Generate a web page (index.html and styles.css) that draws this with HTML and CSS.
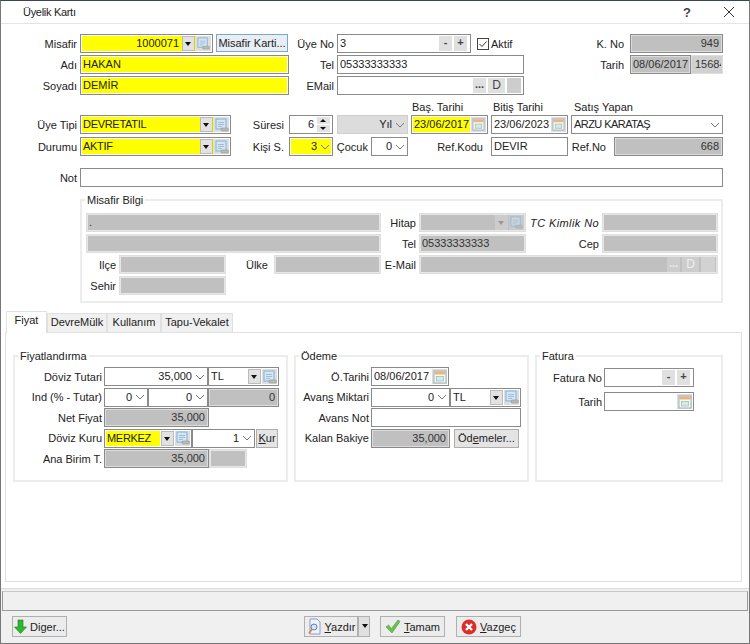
FILE: index.html
```html
<!DOCTYPE html>
<html lang="tr">
<head>
    <meta charset="UTF-8">
    <title>Üyelik Kartı</title>
    <link rel="stylesheet" href="styles.css">
</head>
<body>
    <svg class="defs" width="0" height="0">
        <symbol id="lookup" viewBox="0 0 14 14">
            <rect x="1" y="1" width="10" height="10" fill="#d4e6f6" stroke="#82b2da"/>
            <path d="M3 4.500h6M3 6.500h6M3 8.500h4" stroke="#a4bccf"/>
            <rect x="6" y="10" width="7.500" height="3" rx="1.200" fill="#b8bcb8" stroke="#8c948e" stroke-width=".6"/>
        </symbol>
        <symbol id="cal" viewBox="0 0 14 14">
            <rect x="1" y="1" width="12" height="12" fill="#f8f8f2" stroke="#9ab0c4"/>
            <rect x="1.500" y="1.500" width="11" height="3" fill="#eeb27c"/>
            <rect x="3.500" y="6.500" width="7" height="4.500" fill="#d6e8f0" stroke="#8cc09a" stroke-width=".7"/>
        </symbol>
        <symbol id="chev" viewBox="0 0 10 6">
            <path d="M1 1l4 4 4-4" fill="none" stroke="#777" stroke-width="1"/>
        </symbol>
    </svg>

    <div class="window">
        <div class="titlebar">
            <span class="title">Üyelik Kartı</span>
            <span class="help">?</span>
            <svg class="close" width="12" height="12" viewBox="0 0 12 12"><path d="M1 1l10 10M11 1L1 11" stroke="#333" stroke-width="1"/></svg>
        </div>

        <div class="form">
            <div class="row">
                <label class="lbl w80">Misafir</label>
                <div class="fld yellow w133">
                    <span class="val right">1000071</span>
                    <span class="dd"></span>
                    <span class="ico"><svg width="13" height="13"><use href="#lookup"/></svg></span>
                </div>
                <button class="btn focus w72 ml3">Misafir Karti...</button>
                <label class="lbl w49">Üye No</label>
                <div class="fld w134">
                    <span class="val">3</span>
                    <span class="sq">-</span><span class="sq">+</span>
                </div>
                <span class="check">
                    <svg width="12" height="12" viewBox="0 0 12 12"><rect x=".5" y=".5" width="11" height="11" fill="#fff" stroke="#444"/><path d="M2.500 6l2.500 2.500 4.500-5" fill="none" stroke="#333"/></svg>
                </span>
                <span class="aktif">Aktif</span>
                <label class="lbl gap6 push">K. No</label>
                <div class="fld ro w93"><span class="val right">949</span></div>
            </div>
            <div class="row">
                <label class="lbl w80">Adı</label>
                <div class="fld yellow w209"><span class="val">HAKAN</span></div>
                <label class="lbl w48">Tel</label>
                <div class="fld w187"><span class="val">05333333333</span></div>
                <label class="lbl gap6 push">Tarih</label>
                <div class="fld ro w61"><span class="val">08/06/2017</span></div>
                <div class="fld ro pale w32"><span class="val">15684</span></div>
            </div>
            <div class="row">
                <label class="lbl w80">Soyadı</label>
                <div class="fld yellow w209"><span class="val">DEMİR</span></div>
                <label class="lbl w48">EMail</label>
                <div class="fld w187">
                    <span class="val"></span>
                    <span class="sq">...</span><span class="sq wide">D</span><span class="blank"></span>
                </div>
            </div>

            <div class="heads">
                <span class="w81">Baş. Tarihi</span>
                <span class="w81">Bitiş Tarihi</span>
                <span>Satış Yapan</span>
            </div>
            <div class="row tight">
                <label class="lbl w80">Üye Tipi</label>
                <div class="fld yellow w151">
                    <span class="val kern3">DEVRETATIL</span>
                    <span class="dd"></span>
                    <span class="ico"><svg width="14" height="14"><use href="#lookup"/></svg></span>
                </div>
                <label class="lbl gap5 w58">Süresi</label>
                <div class="fld w44">
                    <span class="val right">6</span>
                    <span class="spin"><i class="up"></i><i class="down"></i></span>
                </div>
                <div class="fld off w71 ml4">
                    <span class="val right">Yıl</span>
                    <svg class="chev" width="10" height="6"><use href="#chev"/></svg>
                </div>
                <div class="fld w77 ml3">
                    <span class="val yellowtext">23/06/2017</span>
                    <span class="ico"><svg width="13" height="13"><use href="#cal"/></svg></span>
                </div>
                <div class="fld w77 ml3">
                    <span class="val">23/06/2023</span>
                    <span class="ico"><svg width="13" height="13"><use href="#cal"/></svg></span>
                </div>
                <div class="fld w152 ml3">
                    <span class="val kern5">ARZU KARATAŞ</span>
                    <svg class="chev" width="10" height="6"><use href="#chev"/></svg>
                </div>
            </div>
            <div class="row mt3">
                <label class="lbl w80">Durumu</label>
                <div class="fld yellow w151">
                    <span class="val kern3">AKTIF</span>
                    <span class="dd"></span>
                    <span class="ico"><svg width="14" height="14"><use href="#lookup"/></svg></span>
                </div>
                <label class="lbl gap5 w58">Kişi S.</label>
                <div class="fld yellow w44">
                    <span class="val right">3</span>
                    <svg class="chev" width="10" height="6"><use href="#chev"/></svg>
                </div>
                <label class="lbl w38">Çocuk</label>
                <div class="fld w37">
                    <span class="val right">0</span>
                    <svg class="chev" width="10" height="6"><use href="#chev"/></svg>
                </div>
                <label class="lbl gap8 w83">Ref.Kodu</label>
                <div class="fld w77"><span class="val">DEVIR</span></div>
                <label class="lbl gap8 w46">Ref.No</label>
                <div class="fld ro w109"><span class="val right">668</span></div>
            </div>
            <div class="row mt12">
                <label class="lbl w80">Not</label>
                <div class="fld w643"><span class="val"></span></div>
            </div>

            <fieldset class="group bilgi">
                <legend>Misafir Bilgi</legend>
                <div class="row first">
                    <div class="fld ro faint w295"><span class="val">.</span></div>
                    <label class="lbl w38">Hitap</label>
                    <div class="fld ro faint w107">
                        <span class="val"></span>
                        <span class="dd dim"></span>
                        <span class="ico dim"><svg width="13" height="13"><use href="#lookup"/></svg></span>
                    </div>
                    <label class="lbl tc w76">TC Kimlik No</label>
                    <div class="fld ro faint w116"><span class="val"></span></div>
                </div>
                <div class="row">
                    <div class="fld ro faint w295"><span class="val"></span></div>
                    <label class="lbl w38">Tel</label>
                    <div class="fld ro faint w107"><span class="val">05333333333</span></div>
                    <label class="lbl w76">Cep</label>
                    <div class="fld ro faint w116"><span class="val"></span></div>
                </div>
                <div class="row">
                    <label class="lbl w33 gap2">Ilçe</label>
                    <div class="fld ro faint w107"><span class="val"></span></div>
                    <label class="lbl w48 gap6">Ülke</label>
                    <div class="fld ro faint w107"><span class="val"></span></div>
                    <label class="lbl w38">E-Mail</label>
                    <div class="fld ro faint w299">
                        <span class="val"></span>
                        <span class="sq dim">...</span><span class="sq wide dim">D</span><span class="blank dim"></span>
                    </div>
                </div>
                <div class="row">
                    <label class="lbl w33 gap2">Sehir</label>
                    <div class="fld ro faint w107"><span class="val"></span></div>
                </div>
            </fieldset>
        </div>

        <div class="tabs">
            <span class="tab active w41">Fiyat</span>
            <span class="tab w60">DevreMülk</span>
            <span class="tab w54">Kullanım</span>
            <span class="tab w72">Tapu-Vekalet</span>
        </div>
        <div class="panel">
            <fieldset class="group w275">
                <legend>Fiyatlandırma</legend>
                <div class="rows">
                    <div class="row">
                        <label class="lbl w89">Döviz Tutari</label>
                        <div class="fld w104"><span class="val right">35,000</span><svg class="chev" width="10" height="6"><use href="#chev"/></svg></div>
                        <div class="fld w71"><span class="val">TL</span><span class="dd"></span><span class="ico"><svg width="14" height="14"><use href="#lookup"/></svg></span></div>
                    </div>
                    <div class="row">
                        <label class="lbl w89">Ind (% - Tutar)</label>
                        <div class="fld w44"><span class="val right">0</span><svg class="chev" width="10" height="6"><use href="#chev"/></svg></div>
                        <div class="fld w60"><span class="val right">0</span><svg class="chev" width="10" height="6"><use href="#chev"/></svg></div>
                        <div class="fld ro w71"><span class="val right">0</span></div>
                    </div>
                    <div class="row">
                        <label class="lbl w89">Net Fiyat</label>
                        <div class="fld ro w105"><span class="val right">35,000</span></div>
                    </div>
                    <div class="row">
                        <label class="lbl w89">Döviz Kuru</label>
                        <div class="fld w88">
                            <span class="val yellowtext kern3">MERKEZ</span>
                            <span class="dd"></span>
                            <span class="ico"><svg width="14" height="14"><use href="#lookup"/></svg></span>
                        </div>
                        <div class="fld w63"><span class="val right">1</span><svg class="chev" width="10" height="6"><use href="#chev"/></svg></div>
                        <button class="btn w22 ml1"><u>K</u>ur</button>
                    </div>
                    <div class="row">
                        <label class="lbl w89">Ana Birim T.</label>
                        <div class="fld ro w105"><span class="val right">35,000</span></div>
                        <div class="fld ro faint w38"><span class="val"></span></div>
                    </div>
                </div>
            </fieldset>

            <fieldset class="group w235">
                <legend>Ödeme</legend>
                <div class="rows">
                    <div class="row">
                        <label class="lbl w75">Ö.Tarihi</label>
                        <div class="fld w78"><span class="val">08/06/2017</span><span class="ico"><svg width="14" height="14"><use href="#cal"/></svg></span></div>
                    </div>
                    <div class="row">
                        <label class="lbl w75">Avan<u>s</u> Miktari</label>
                        <div class="fld w79"><span class="val right">0</span><svg class="chev" width="10" height="6"><use href="#chev"/></svg></div>
                        <div class="fld w71"><span class="val">TL</span><span class="dd"></span><span class="ico"><svg width="14" height="14"><use href="#lookup"/></svg></span></div>
                    </div>
                    <div class="row">
                        <label class="lbl w75">Avans Not</label>
                        <div class="fld w150"><span class="val"></span></div>
                    </div>
                    <div class="row">
                        <label class="lbl w75">Kalan Bakiye</label>
                        <div class="fld ro w79"><span class="val right">35,000</span></div>
                        <button class="btn w65 ml4">Öd<u>e</u>meler...</button>
                    </div>
                </div>
            </fieldset>

            <fieldset class="group w188">
                <legend>Fatura</legend>
                <div class="rows fatura">
                    <div class="row">
                        <label class="lbl w67">Fatura No</label>
                        <div class="fld w90"><span class="val"></span><span class="sq">-</span><span class="sq">+</span></div>
                    </div>
                    <div class="row">
                        <label class="lbl w67">Tarih</label>
                        <div class="fld w90"><span class="val"></span><span class="ico"><svg width="14" height="14"><use href="#cal"/></svg></span></div>
                    </div>
                </div>
            </fieldset>
        </div>

        <div class="bottom">
            <div class="status"></div>
            <div class="buttons">
                <button class="btn big w55">
                    <svg width="13" height="15" viewBox="0 0 13 15"><path d="M4 1h5v7h3.500L6.500 14.500.5 8H4z" fill="#2fb52f" stroke="#1a7d1a" stroke-width=".6"/></svg>
                    <span>Di<u>g</u>er...</span>
                </button>
                <button class="btn big w54 yazdir">
                    <svg width="15" height="17" viewBox="0 0 15 17"><path d="M3 1h7l3 3v12H3z" fill="#eef2fa" stroke="#8a9cc8"/><circle cx="7" cy="9" r="3" fill="#d6e4f6" stroke="#6a7eb4"/><path d="M5 11l-3 4.500" stroke="#d08a38" stroke-width="1.600"/></svg>
                    <span><u>Y</u>azdır</span>
                </button>
                <button class="btn big w12 arrow"><span class="dd bare"></span></button>
                <button class="btn big w65 ml10">
                    <svg width="16" height="15" viewBox="0 0 16 15"><path d="M1 8l2.500-2 3 3.500L13 1l2 1.500L7 14z" fill="#6fc04f" stroke="#4a9a3a" stroke-width=".6"/></svg>
                    <span><u>T</u>amam</span>
                </button>
                <button class="btn big w65 ml11">
                    <svg width="16" height="16" viewBox="0 0 16 16"><circle cx="8" cy="8" r="7.500" fill="#e02b2b"/><path d="M5 5l6 6M11 5l-6 6" stroke="#fff" stroke-width="2.400"/></svg>
                    <span><u>V</u>azgeç</span>
                </button>
            </div>
        </div>
    </div>
</body>
</html>
```

FILE: styles.css
```css
* {
    box-sizing: border-box;
}
html, body {
    margin: 0;
    padding: 0;
}
body {
    font-family: "Liberation Sans", Arial, sans-serif;
    font-size: 11px;
    color: #222;
    background: #fff;
}
.defs {
    position: absolute;
}
.window {
    width: 750px;
    height: 644px;
    display: flex;
    flex-direction: column;
    overflow: hidden;
    border-top: 1px solid #3c4650;
    border-right: 1px solid #777;
    border-left: 1px solid #777;
}

/* title bar */
.titlebar {
    height: 23px;
    flex: none;
    display: flex;
    align-items: center;
    padding-left: 22px;
    border-bottom: 1px solid #e4e4e4;
}
.title {
    flex: 1;
    letter-spacing: -.3px;
}
.help {
    width: 12px;
    margin-right: 28px;
    font-size: 13px;
    font-weight: bold;
    color: #444;
}
.close {
    margin-right: 14px;
}

/* upper form */
.form {
    flex: none;
    padding-top: 10px;
    margin-left: -1px;
}
.row {
    display: flex;
    align-items: stretch;
    width: 723px;
    height: 19px;
    margin-top: 2px;
    flex: none;
}
.row:first-child {
    margin-top: 0;
}
.row.tight {
    margin-top: 1px;
}
.row.mt3 {
    margin-top: 3px;
}
.row.mt12 {
    margin-top: 12px;
}
.heads {
    display: flex;
    height: 14px;
    margin-top: 5px;
    padding-left: 412px;
    align-items: center;
}
.lbl {
    flex: none;
    display: flex;
    align-items: center;
    justify-content: flex-end;
    padding-right: 3px;
    white-space: pre;
}
.lbl u {
    text-decoration: underline;
}
.lbl.gap2 { padding-right: 2px; }
.lbl.gap5 { padding-right: 5px; }
.lbl.gap6 { padding-right: 6px; }
.lbl.gap8 { padding-right: 8px; }
.lbl.tc {
    font-style: italic;
    letter-spacing: .4px;
}
.push { margin-left: auto; }

/* fields */
.fld {
    flex: none;
    display: flex;
    align-items: center;
    gap: 1px;
    border: 1px solid #8a8a8a;
    box-shadow: inset 0 0 0 1px #fff;
    background: #fff;
    padding: 1px;
    overflow: hidden;
    white-space: nowrap;
}
.val {
    flex: 1;
    min-width: 0;
    padding: 0 2px 0 1px;
    line-height: 15px;
    height: 15px;
    overflow: hidden;
}
.kern3 { letter-spacing: -.3px; }
.kern5 { letter-spacing: -.55px; }
.right {
    text-align: right;
}
.yellow,
.yellow .val,
.yellowtext {
    background: #ffff00;
}
.ro {
    background: #c0c0c0;
    box-shadow: inset 0 0 0 1px #dcdcdc;
    color: #333;
}
.ro.pale {
    background: #d0d0d0;
    border-color: #ddd;
    box-shadow: none;
}
.ro.pale .val {
    padding: 0 0 0 2px;
    overflow: hidden;
}
.ro.faint {
    border-color: #dedede;
    box-shadow: inset 0 0 0 1px #e6e6e6;
}
.off {
    background: #dcdcdc;
    border-color: #cfcfcf;
    box-shadow: none;
}
.dd {
    flex: none;
    width: 13px;
    height: 15px;
    background: #e2e2e2;
    border: 1px solid #bbb;
    position: relative;
}
.dd::after {
    content: "";
    position: absolute;
    left: 2px;
    top: 5px;
    border-left: 3.500px solid transparent;
    border-right: 3.500px solid transparent;
    border-top: 4px solid #111;
}
.dd.dim {
    background: #ccc;
    border-color: #ccc;
}
.dd.dim::after {
    border-top-color: #999;
}
.dd.bare {
    display: block;
    width: 9px;
    background: none;
    border: 0;
}
.ico {
    flex: none;
    width: 15px;
    height: 15px;
    background: #dedede;
    display: flex;
    align-items: center;
    justify-content: center;
}
.ico.dim {
    background: #d0d0d0;
    opacity: .6;
}
.sq {
    flex: none;
    width: 13px;
    height: 15px;
    line-height: 13px;
    text-align: center;
    background: #e0e0e0;
    margin-right: 1px;
    font-weight: bold;
    color: #444;
}
.sq:last-child {
    margin-right: 2px;
}
.sq.wide {
    width: 17px;
    font-weight: normal;
    font-size: 12px;
    line-height: 15px;
}
.sq.dim {
    background: #cdcdcd;
    color: #eee;
}
.blank {
    flex: none;
    width: 14px;
    height: 15px;
    background: #cdcdcd;
    margin-right: 1px;
}
.blank.dim {
    background: #d2d2d2;
}
.chev {
    flex: none;
    margin-right: 1px;
}
.spin {
    flex: none;
    width: 13px;
    height: 15px;
    margin-right: 1px;
    display: flex;
    flex-direction: column;
    gap: 1px;
}
.spin i {
    flex: 1;
    background: #e2e2e2;
    position: relative;
}
.spin i::after {
    content: "";
    position: absolute;
    left: 3px;
    top: 2px;
    border-left: 3px solid transparent;
    border-right: 3px solid transparent;
}
.spin .up::after {
    border-bottom: 3px solid #111;
}
.spin .down::after {
    border-top: 3px solid #111;
}
.check {
    flex: none;
    margin: 4px 2px 0 6px;
    height: 12px;
    line-height: 0;
}
.aktif {
    align-self: center;
}

/* buttons */
.btn {
    flex: none;
    font: inherit;
    color: #222;
    background: #e4e4e4;
    border: 1px solid #adadad;
    padding: 0;
    white-space: nowrap;
}
.btn.focus {
    border: 1px solid #7aa7d0;
    background: #e8eef4;
    height: 18px;
}

/* groups */
.group {
    margin: 0;
    padding: 4px 0 0 0;
    border: 2px solid #ececec;
    height: 133px;
    min-width: 0;
    flex: none;
}
.group legend {
    margin-left: 3px;
    padding: 0 2px;
    height: 14px;
    line-height: 14px;
}
.group .lbl {
    padding-right: 2px;
}
.bilgi {
    margin: 6px 0 0 80px;
    width: 643px;
    height: 110px;
    padding: 4px 0 0 4px;
}
.bilgi legend {
    margin-left: -1px;
}
.bilgi .row {
    width: auto;
}
.bilgi .lbl {
    padding-right: 3px;
}
.bilgi .lbl.gap6 {
    padding-right: 6px;
}
.rows {
    display: flex;
    flex-direction: column;
    gap: 1.500px;
}
.rows .row {
    width: auto;
    margin-top: 0;
}
.rows.fatura {
    padding-top: 1px;
    gap: 5px;
}

/* tabs */
.tabs {
    flex: none;
    display: flex;
    align-items: flex-end;
    height: 21px;
    margin: 8px 0 0 5px;
    position: relative;
    z-index: 1;
}
.tab {
    flex: none;
    height: 19px;
    line-height: 17px;
    text-align: center;
    background: #f0f0f0;
    border: 1px solid #e0e0e0;
    border-bottom: 0;
}
.tab.active {
    height: 22px;
    margin-bottom: -1px;
    background: #fff;
}
.panel {
    flex: none;
    display: flex;
    gap: 6px;
    width: 737px;
    height: 250px;
    margin-left: 4px;
    padding: 16px 0 0 7px;
    border: 1px solid #e0e0e0;
}

/* bottom */
.bottom {
    flex: none;
    margin-top: 6px;
    height: 57px;
    margin-left: -1px;
    margin-right: -1px;
    background: #f0f0f0;
    border-top: 1px solid #dcdcdc;
    border-bottom: 2px solid #777;
    padding-top: 2px;
}
.status {
    height: 20px;
    margin: 0 2px;
    border: 1px solid #999;
    border-top-color: #c8c8c8;
}
.buttons {
    display: flex;
    height: 21px;
    margin-top: 5px;
    padding-left: 12px;
}
.big {
    display: flex;
    align-items: center;
    justify-content: center;
    gap: 3px;
    background: #ececec;
    border: 1px solid #b0b0b0;
}
.yazdir { margin-left: 237px; }
.arrow { background: #e0e0e0; }

/* sizes */
.ml1 { margin-left: 1px; }
.ml3 { margin-left: 3px; }
.ml4 { margin-left: 4px; }
.ml10 { margin-left: 10px; }
.ml11 { margin-left: 11px; }
.w12 { width: 12px; }
.w22 { width: 22px; }
.w32 { width: 32px; }
.w33 { width: 33px; }
.w37 { width: 37px; }
.w38 { width: 38px; }
.w41 { width: 41px; }
.w44 { width: 44px; }
.w46 { width: 46px; }
.w48 { width: 48px; }
.w49 { width: 49px; }
.w54 { width: 54px; }
.w55 { width: 55px; }
.w58 { width: 58px; }
.w60 { width: 60px; }
.w61 { width: 61px; }
.w63 { width: 63px; }
.w65 { width: 65px; }
.w67 { width: 67px; }
.w71 { width: 71px; }
.w72 { width: 72px; }
.w75 { width: 75px; }
.w76 { width: 76px; }
.w77 { width: 77px; }
.w78 { width: 78px; }
.w79 { width: 79px; }
.w80 { width: 80px; }
.w81 { width: 81px; }
.w83 { width: 83px; }
.w88 { width: 88px; }
.w89 { width: 89px; }
.w90 { width: 90px; }
.w93 { width: 93px; }
.w104 { width: 104px; }
.w105 { width: 105px; }
.w107 { width: 107px; }
.w109 { width: 109px; }
.w116 { width: 116px; }
.w133 { width: 133px; }
.w134 { width: 134px; }
.w150 { width: 150px; }
.w151 { width: 151px; }
.w152 { width: 152px; }
.w187 { width: 187px; }
.w188 { width: 188px; }
.w209 { width: 209px; }
.w235 { width: 235px; }
.w275 { width: 275px; }
.w295 { width: 295px; }
.w299 { width: 299px; }
.w643 { width: 643px; }
```
